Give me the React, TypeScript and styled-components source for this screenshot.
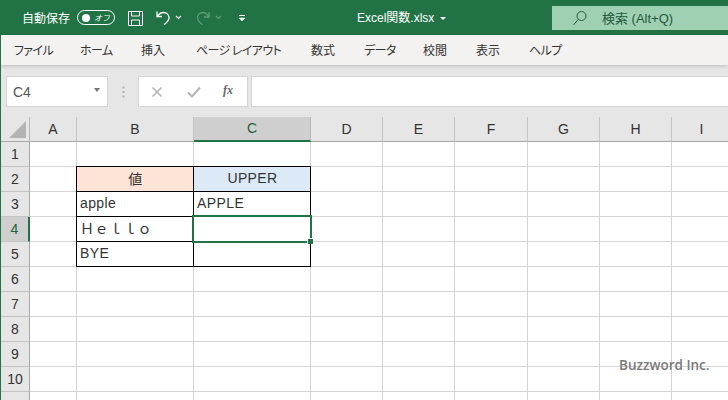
import styled, { createGlobalStyle } from 'styled-components';

const GlobalStyle = createGlobalStyle`
  html, body {
    margin: 0;
    padding: 0;
    background: #fff;
  }
  body {
    font-family: "Liberation Sans", "Noto Sans CJK JP", sans-serif;
  }
`;

const Page = styled.div`
  width: 728px;
  height: 400px;
  overflow: hidden;
  display: flex;
  flex-direction: column;
  background: #e6e6e6;
  position: relative;
`;

const TitleBar = styled.div`
  height: 35px;
  flex: none;
  background: #217346;
  color: #fff;
  display: flex;
  align-items: flex-start;
  font-size: 12px;
`;

const AutoSave = styled.span`
  margin: 9px 0 0 22px;
  width: 50px;
  font-family: "Noto Sans CJK JP", sans-serif;
  line-height: 17px;
  white-space: nowrap;
`;

const Toggle = styled.span`
  margin: 10px 0 0 5px;
  width: 38px;
  height: 15px;
  flex: none;
  box-sizing: border-box;
  border: 1px solid #fff;
  border-radius: 8px;
  display: flex;
  align-items: center;
  justify-content: space-between;
  padding: 0 4px;
  font-size: 8px;
  line-height: 13px;
  font-style: italic;
  white-space: nowrap;
  font-family: "Noto Sans CJK JP", sans-serif;
  &::before {
    content: '';
    flex: none;
    width: 8px;
    height: 8px;
    border-radius: 50%;
    background: #fff;
  }
`;

const QuickIcon = styled.svg<{ $left: number; $top: number }>`
  margin: ${(p) => p.$top}px 0 0 ${(p) => p.$left}px;
  flex: none;
`;

const FileName = styled.span`
  position: absolute;
  left: 357px;
  top: 10px;
  line-height: 16px;
  font-size: 12px;
  color: #fff;
  font-family: "Liberation Sans", "Noto Sans CJK JP", sans-serif;
  white-space: nowrap;
`;

const Caret = styled.span`
  display: inline-block;
  margin-left: 6px;
  vertical-align: 2px;
  border-left: 3px solid transparent;
  border-right: 3px solid transparent;
  border-top: 3px solid #fff;
`;

const SearchBox = styled.div`
  margin: 6px 0 0 auto;
  width: 176px;
  height: 24px;
  background: #9fd0b2;
  color: #24593c;
  display: flex;
  align-items: center;
  gap: 14px;
  padding: 0 0 1px 20px;
  box-sizing: border-box;
  font-size: 13px;
  font-family: "Liberation Sans", "Noto Sans CJK JP", sans-serif;
`;

const TabBar = styled.div`
  height: 30px;
  flex: none;
  background: #f3f2f1;
  display: flex;
  align-items: center;
  padding-left: 13px;
  padding-bottom: 1px;
  box-sizing: border-box;
  border-left: 1px solid #217346;
  box-shadow: 0 1px 4px rgba(0, 0, 0, 0.18);
  position: relative;
`;

const Tab = styled.span<{ $width: number; $kana?: boolean }>`
  width: ${(p) => p.$width}px;
  flex: none;
  font-size: 12px;
  letter-spacing: ${(p) => (p.$kana ? '-0.6px' : '0')};
  color: #333;
  font-family: "Noto Sans CJK JP", sans-serif;
  font-feature-settings: "palt";
  white-space: nowrap;
`;

const FormulaRow = styled.div`
  height: 52px;
  flex: none;
  display: flex;
  align-items: flex-start;
  padding: 11px 0 0 5px;
  box-sizing: border-box;
  border-left: 1px solid #217346;
`;

const NameBox = styled.div`
  width: 102px;
  height: 31px;
  background: #fff;
  border: 1px solid #d4d4d4;
  box-sizing: border-box;
  display: flex;
  align-items: center;
  justify-content: space-between;
  padding: 0 7px 0 6px;
  font-size: 14px;
  color: #555;
`;

const DownArrow = styled.span`
  border-left: 3.5px solid transparent;
  border-right: 3.5px solid transparent;
  border-top: 4px solid #777;
  margin-top: -3px;
`;

const Grip = styled.span`
  width: 30px;
  height: 31px;
  flex: none;
  display: flex;
  align-items: center;
  justify-content: center;
`;

const FormulaButtons = styled.div`
  width: 110px;
  height: 31px;
  flex: none;
  background: #fff;
  border: 1px solid #d4d4d4;
  box-sizing: border-box;
  display: flex;
  align-items: center;
  padding-left: 12px;
`;

const FxMark = styled.span`
  font-family: "Liberation Serif", serif;
  font-style: italic;
  font-weight: bold;
  font-size: 12px;
  color: #666;
  margin-left: 22px;
  margin-top: -2px;
`;

const FormulaInput = styled.div`
  flex: 1;
  height: 31px;
  margin-left: 3px;
  background: #fff;
  border: 1px solid #d4d4d4;
  border-right: 0;
  box-sizing: border-box;
`;

const Sheet = styled.div`
  flex: 1;
  display: grid;
  grid-template-columns: 29px 47px 117px 117px 72px 72px 73px 72px 72px 60px;
  grid-auto-rows: 25px;
  border-left: 1px solid #217346;
  background: #fff;
  align-content: start;
`;

const Corner = styled.div`
  background: #e6e6e6;
  border-right: 1px solid #b8b8b8;
  border-bottom: 1px solid #a8a8a8;
  position: relative;
  &::after {
    content: '';
    position: absolute;
    right: 3px;
    bottom: 3px;
    border-style: solid;
    border-width: 0 0 17px 17px;
    border-color: transparent transparent #b4b4b4 transparent;
  }
`;

const ColHead = styled.div<{ $on?: boolean }>`
  background: ${(p) => (p.$on ? '#cfcfcf' : '#e6e6e6')};
  color: ${(p) => (p.$on ? '#20603c' : '#333')};
  border-right: 1px solid ${(p) => (p.$on ? '#b8b8b8' : '#c4c4c4')};
  border-bottom: ${(p) => (p.$on ? '2px solid #217346' : '1px solid #a8a8a8')};
  box-sizing: border-box;
  display: flex;
  align-items: center;
  justify-content: center;
  font-size: 14px;
  padding-bottom: 1px;
`;

const RowHead = styled.div<{ $on?: boolean }>`
  background: ${(p) => (p.$on ? '#cfcfcf' : '#e6e6e6')};
  color: ${(p) => (p.$on ? '#20603c' : '#333')};
  border-right: ${(p) => (p.$on ? '2px solid #217346' : '1px solid #a8a8a8')};
  border-bottom: 1px solid #c4c4c4;
  box-sizing: border-box;
  display: flex;
  align-items: center;
  justify-content: center;
  font-size: 14px;
  padding-bottom: 1px;
`;

const Cell = styled.div<{ $fill?: string; $boxed?: boolean; $center?: boolean; $selected?: boolean }>`
  background: ${(p) => p.$fill ?? '#fff'};
  border-right: 1px solid ${(p) => (p.$boxed ? '#000' : '#d4d4d4')};
  border-bottom: 1px solid ${(p) => (p.$boxed ? '#000' : '#d4d4d4')};
  box-shadow: ${(p) => (p.$boxed ? '-1px 0 0 #000, 0 -1px 0 #000, -1px -1px 0 #000' : 'none')};
  position: relative;
  z-index: ${(p) => (p.$selected ? 2 : p.$boxed ? 1 : 0)};
  box-sizing: border-box;
  display: flex;
  align-items: center;
  justify-content: ${(p) => (p.$center ? 'center' : 'flex-start')};
  padding: 0 2px 2px 3px;
  font-size: 14px;
  letter-spacing: 0.4px;
  color: #333;
  font-family: "Liberation Sans", "Noto Sans CJK JP", sans-serif;
  white-space: pre;
`;

const Selection = styled.div`
  position: absolute;
  left: -2px;
  top: -2px;
  right: -2px;
  bottom: -2px;
  border: 2px solid #217346;
  &::after {
    content: '';
    position: absolute;
    right: -3px;
    bottom: -3px;
    width: 5px;
    height: 5px;
    background: #217346;
    border: 1px solid #fff;
    border-width: 1px 0 0 1px;
  }
`;

const Watermark = styled.div`
  position: absolute;
  left: 619px;
  top: 356px;
  font-family: "Open Sans", "Liberation Sans", sans-serif;
  font-size: 13.5px;
  font-weight: 600;
  color: #7a7a7a;
  z-index: 3;
  white-space: nowrap;
`;

const tabs: [string, number, boolean][] = [
  ['ファイル', 66, true],
  ['ホーム', 61, true],
  ['挿入', 55, false],
  ['ページ レイアウト', 115, true],
  ['数式', 53, false],
  ['データ', 59, true],
  ['校閲', 53, false],
  ['表示', 53, false],
  ['ヘルプ', 50, true],
];

const columns = ['A', 'B', 'C', 'D', 'E', 'F', 'G', 'H', 'I'];

type CellData = { text?: string; fill?: string; center?: boolean; boxed?: boolean; selected?: boolean };

const table: Record<string, CellData> = {
  B2: { text: '値', fill: '#fde4d6', center: true, boxed: true },
  C2: { text: 'UPPER', fill: '#dce9f6', center: true, boxed: true },
  B3: { text: 'apple', boxed: true },
  C3: { text: 'APPLE', boxed: true },
  B4: { text: 'Ｈｅｌｌｏ', boxed: true },
  C4: { boxed: true, selected: true },
  B5: { text: 'BYE', boxed: true },
  C5: { boxed: true },
};

const rows = [1, 2, 3, 4, 5, 6, 7, 8, 9, 10, 11];

export default function App() {
  return (
    <>
      <GlobalStyle />
      <Page>
        <TitleBar>
          <AutoSave>自動保存</AutoSave>
          <Toggle>オフ</Toggle>
          <QuickIcon $left={12} $top={10} width="17" height="17" viewBox="0 0 17 17" fill="none" stroke="#fff" strokeWidth="1">
            <path d="M1.5 1.5h14v14h-14z" />
            <path d="M4.5 1.5v4.5h8v-4.5M4.5 15.5v-5.500h8v5.500" />
          </QuickIcon>
          <QuickIcon $left={11} $top={10} width="18" height="17" viewBox="0 0 18 17" fill="none" stroke="#fff" strokeWidth="1.3">
            <path d="M2 1.5v5h5M2.2 6.5c2-3 4-4 6.300-4 3.500 0 5.500 2.500 5.500 5.300 0 3-2.500 5-5 7" />
          </QuickIcon>
          <QuickIcon $left={2} $top={15} width="7" height="5" viewBox="0 0 7 5" fill="none" stroke="#fff" strokeWidth="1.2">
            <path d="M1 1l2.5 2.5L6 1" />
          </QuickIcon>
          <QuickIcon $left={13} $top={10} width="18" height="17" viewBox="0 0 18 17" fill="none" stroke="#5d9c7a" strokeWidth="1.3">
            <path d="M14 2v5H9M14 7c-2-3-3.500-4.500-6-4.500C4.500 2.500 2.500 5 2.500 7.800c0 3 2.500 5 5 7" />
          </QuickIcon>
          <QuickIcon $left={2} $top={15} width="7" height="5" viewBox="0 0 7 5" fill="none" stroke="#5d9c7a" strokeWidth="1.2">
            <path d="M1 1l2.500 2.500L6 1" />
          </QuickIcon>
          <QuickIcon $left={16} $top={14} width="8" height="8" viewBox="0 0 8 8" fill="none" stroke="#fff" strokeWidth="1">
            <path d="M1 1.500h6" />
            <path d="M1 4l3 3 3-3z" fill="#fff" strokeWidth="0.5" />
          </QuickIcon>
          <FileName>
            Excel関数.xlsx
            <Caret />
          </FileName>
          <SearchBox>
            <svg width="16" height="16" viewBox="0 0 16 16" fill="none" stroke="#24593c" strokeWidth="1">
              <circle cx="9.500" cy="6" r="4.500" />
              <path d="M6.300 9.300L1.500 15" />
            </svg>
            <span>検索 (Alt+Q)</span>
          </SearchBox>
        </TitleBar>
        <TabBar>
          {tabs.map(([label, width, kana]) => (
            <Tab key={label} $width={width} $kana={kana}>
              {label}
            </Tab>
          ))}
        </TabBar>
        <FormulaRow>
          <NameBox>
            C4
            <DownArrow />
          </NameBox>
          <Grip>
            <svg width="3" height="12" viewBox="0 0 3 12" fill="#b0b0b0">
              <rect x="0.500" y="0.500" width="2" height="2" />
              <rect x="0.500" y="5" width="2" height="2" />
              <rect x="0.500" y="9.500" width="2" height="2" />
            </svg>
          </Grip>
          <FormulaButtons>
            <svg width="12" height="12" viewBox="0 0 12 12" stroke="#b4b4b4" strokeWidth="1.600" fill="none">
              <path d="M1.500 1.500l9 9M10.500 1.500l-9 9" />
            </svg>
            <svg width="14" height="12" viewBox="0 0 14 12" stroke="#b4b4b4" strokeWidth="2" fill="none" style={{ marginLeft: 24 }}>
              <path d="M1 6.500l4 4 8-9" />
            </svg>
            <FxMark>fx</FxMark>
          </FormulaButtons>
          <FormulaInput />
        </FormulaRow>
        <Sheet>
          <Corner />
          {columns.map((c) => (
            <ColHead key={c} $on={c === 'C'}>
              {c}
            </ColHead>
          ))}
          {rows.map((r) => (
            <Row key={r} row={r} />
          ))}
        </Sheet>
        <Watermark>Buzzword Inc.</Watermark>
      </Page>
    </>
  );
}

function Row({ row }: { row: number }) {
  return (
    <>
      {/* row 11 only peeks in at the bottom edge, its number is below the fold */}
      <RowHead $on={row === 4}>{row <= 10 ? row : null}</RowHead>
      {columns.map((c) => {
        const data = table[c + row];
        return (
          <Cell key={c} $fill={data?.fill} $boxed={data?.boxed} $center={data?.center} $selected={data?.selected}>
            {data?.text}
            {data?.selected && <Selection />}
          </Cell>
        );
      })}
    </>
  );
}
